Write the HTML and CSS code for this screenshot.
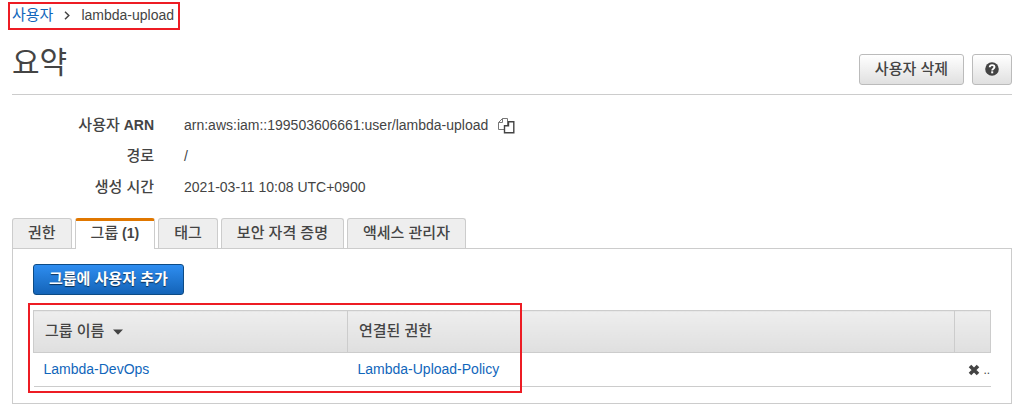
FILE: index.html
```html
<!DOCTYPE html>
<html lang="ko">
<head>
    <meta charset="UTF-8">
    <meta name="viewport" content="width=device-width, initial-scale=1.0">
    <title>lambda-upload</title>
    <link rel="stylesheet" href="styles.css">
</head>
<body>
    <div class="page">
        <nav class="breadcrumb">
            <a href="#" class="ko">사용자</a>
            <svg class="chevron" width="6" height="9" viewBox="0 0 6 9"><path d="M1 0.8L4.8 4.5L1 8.2" fill="none" stroke="#444" stroke-width="1.5"/></svg>
            <span>lambda-upload</span>
        </nav>

        <header class="page-header">
            <h1>요약</h1>
            <div class="actions">
                <button type="button" class="btn ko">사용자 삭제</button>
                <button type="button" class="btn btn-help" aria-label="도움말">
                    <svg width="14" height="14" viewBox="0 0 14 14"><circle cx="7" cy="7" r="6.8" fill="#444"/><path d="M4.7 5.3C4.8 3.8 5.8 3.1 7.1 3.1C8.5 3.1 9.5 3.9 9.5 5.1C9.5 6.7 7.2 6.7 7.2 8.4" fill="none" stroke="#fff" stroke-width="1.9"/><rect x="6.2" y="9.3" width="2" height="2" fill="#fff"/></svg>
                </button>
            </div>
        </header>

        <dl class="summary">
            <dt><span class="ko">사용자</span> ARN</dt>
            <dd>
                arn:aws:iam::199503606661:user/lambda-upload
                <button type="button" class="copy" aria-label="복사">
                    <svg width="17" height="17" viewBox="0 0 17 17" fill="#fff"><path d="M4.5 1.5H9.5V12.5H0.5V5.5Z" stroke="#777"/><path d="M0.5 5.5H4.5V1.5" fill="none" stroke="#777"/><path d="M10.5 4.8H15.8V15.8H6.5V8.8H10.5Z" stroke="#444" stroke-width="1.4"/></svg>
                </button>
            </dd>
            <dt class="ko">경로</dt>
            <dd>/</dd>
            <dt class="ko">생성 시간</dt>
            <dd>2021-03-11 10:08 UTC+0900</dd>
        </dl>

        <div class="tabs" role="tablist">
            <button type="button" class="tab ko" role="tab">권한</button>
            <button type="button" class="tab active" role="tab" aria-selected="true"><span class="ko">그룹</span> (1)</button>
            <button type="button" class="tab ko" role="tab">태그</button>
            <button type="button" class="tab ko" role="tab">보안 자격 증명</button>
            <button type="button" class="tab ko" role="tab">액세스 관리자</button>
        </div>

        <section class="panel">
            <button type="button" class="btn-primary ko">그룹에 사용자 추가</button>

            <div class="table-wrap">
                <table class="groups">
                    <colgroup>
                        <col class="col-name">
                        <col>
                        <col class="col-action">
                    </colgroup>
                    <thead>
                        <tr>
                            <th class="ko">그룹 이름 <svg class="sort" width="10" height="6" viewBox="0 0 10 6"><path d="M0 0.5H10L5 5.8Z" fill="#444"/></svg></th>
                            <th class="ko">연결된 권한</th>
                            <th></th>
                        </tr>
                    </thead>
                    <tbody>
                        <tr>
                            <td><a href="#">Lambda-DevOps</a></td>
                            <td><a href="#">Lambda-Upload-Policy</a></td>
                            <td class="remove-cell">
                                <button type="button" class="remove" aria-label="제거">
                                    <svg width="12" height="12" viewBox="0 0 12 12"><path d="M2 2L10 10M10 2L2 10" stroke="#444" stroke-width="3.6"/></svg>
                                </button>
                                <span class="dots">..</span>
                            </td>
                        </tr>
                    </tbody>
                </table>
                <div class="highlight"></div>
            </div>
        </section>
    </div>
</body>
</html>
```
FILE: styles.css
```css
* {
    box-sizing: border-box;
}

body {
    margin: 0;
    background-color: #fff;
    color: #444;
    font-family: "Liberation Sans", Arial, "Noto Sans CJK KR", sans-serif;
    font-size: 14px;
    line-height: 20px;
}

button {
    font-family: inherit;
    font-size: 14px;
    line-height: 20px;
    color: #444;
    cursor: pointer;
}

a {
    color: #1166bb;
    text-decoration: none;
}

.ko {
    font-size: 15px;
}

.page {
    padding: 2px 9px 8px 12px;
}

.breadcrumb {
    display: flex;
    align-items: center;
    width: fit-content;
    height: 28px;
    margin-left: -4px;
    padding: 0 4px 2px 2px;
    border: 2px solid #ed1c24;
}

.chevron {
    margin: 0 11px;
}

/* Header */
.page-header {
    display: flex;
    justify-content: space-between;
    align-items: flex-end;
    height: 65px;
    padding-bottom: 9px;
    border-bottom: 1px solid #ccc;
}

h1 {
    margin: 0 0 2px;
    font-size: 30px;
    font-weight: normal;
    line-height: 40px;
}

.actions {
    display: flex;
    gap: 8px;
}

.btn {
    height: 31px;
    padding: 0 15px 2px;
    border: 1px solid #bbb;
    border-radius: 3px;
    background: linear-gradient(#fff, #e0e0e0);
    font-weight: 500;
}

.btn-help {
    display: flex;
    align-items: center;
    justify-content: center;
    width: 40px;
    padding: 0 0 2px;
}

/* Summary */
.summary {
    display: grid;
    grid-template-columns: 142px 1fr;
    column-gap: 30px;
    row-gap: 11px;
    margin: 20px 0 21px;
}

.summary dt {
    height: 20px;
    font-weight: bold;
    text-align: right;
}

.summary dt.ko,
.summary dt .ko {
    font-weight: 500;
}

.summary dd {
    display: flex;
    align-items: center;
    gap: 10px;
    height: 20px;
    margin: 0;
}

.copy {
    display: flex;
    padding: 0;
    border: 0;
    background: none;
}

/* Tabs */
.tabs {
    display: flex;
    gap: 3px;
}

.tab {
    height: 30px;
    padding: 0 15px 2px;
    border: 1px solid #ccc;
    border-bottom: 0;
    border-radius: 3px 3px 0 0;
    background-color: #eee;
    font-weight: 500;
}

.tab.active {
    height: 31px;
    margin-bottom: -1px;
    padding-bottom: 4px;
    border-top: 3px solid #e07700;
    background-color: #fff;
    font-weight: bold;
}

.tab.active .ko {
    font-weight: 500;
}

.panel {
    padding: 15px 20px 16px;
    border: 1px solid #ccc;
}

.btn-primary {
    display: block;
    height: 31px;
    padding: 0 15px 2px;
    border: 1px solid #0d4b85;
    border-radius: 3px;
    background: linear-gradient(#2e8df0, #1464b8);
    color: #fff;
    font-weight: bold;
    text-shadow: 0 1px 1px rgba(0, 0, 0, 0.6);
}

/* Group table */
.table-wrap {
    position: relative;
    margin-top: 15px;
}

.groups {
    width: 100%;
    border-collapse: collapse;
    table-layout: fixed;
}

.col-name {
    width: 314px;
}

.col-action {
    width: 36px;
}

.groups th {
    height: 42px;
    padding: 0 11px 2px;
    border: 1px solid #ccc;
    background: linear-gradient(#eee, #dfdfdf);
    font-weight: 500;
    text-align: left;
}

.sort {
    margin-left: 4px;
    vertical-align: 1px;
}

.groups td {
    height: 34px;
    padding: 0 10px 2px;
    border-bottom: 1px solid #ccc;
}

.groups .remove-cell {
    padding: 0 0 0 13px;
    overflow: hidden;
    white-space: nowrap;
}

.remove {
    padding: 0;
    border: 0;
    background: none;
    vertical-align: middle;
}

.remove svg {
    display: block;
}

.dots {
    font-size: 12px;
}

/* Red frame around the group columns */
.highlight {
    position: absolute;
    top: -7px;
    left: -5px;
    width: 494px;
    height: 90px;
    border: 2px solid #ed1c24;
    pointer-events: none;
}
```
